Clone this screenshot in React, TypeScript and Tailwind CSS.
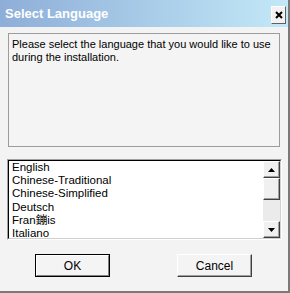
import React from "react";

const languages = [
  "English",
  "Chinese-Traditional",
  "Chinese-Simplified",
  "Deutsch",
  "Fran鏰is",
  "Italiano",
  "Espa駉l",
];

function ScrollButton({ dir }: { dir: "up" | "down" }) {
  return (
    <div className="h-[17px] w-full bg-[#f0f0f0] border-t border-l border-t-white border-l-white border-r border-b border-r-[#404040] border-b-[#404040] shadow-[inset_-1px_-1px_0_#a0a0a0] flex items-center justify-center">
      <svg width="7" height="4" viewBox="0 0 7 4">
        {dir === "up" ? <polygon points="3.5,0 7,4 0,4" fill="#000" /> : <polygon points="0,0 7,0 3.5,4" fill="#000" />}
      </svg>
    </div>
  );
}

export default function App() {
  return (
    <div
      className="w-[290px] h-[293px] bg-[#f3f3f3] flex flex-col border-r-2 border-b-2 border-[#7a7a7a] overflow-hidden"
      style={{ fontFamily: '"Liberation Sans", Arial, "Noto Sans CJK SC", sans-serif' }}
    >
      {/* title bar */}
      <div className="h-[27px] shrink-0 bg-gradient-to-r from-[#8eaed8] to-[#c3e8f7] flex items-center justify-between pl-[5px] pr-[2px]">
        <span className="text-white text-[13px] font-bold leading-none">Select Language</span>
        <div className="w-[15px] h-[18px] mt-[2px] bg-[#f2f2f2] border-t border-l border-white border-r border-b border-r-[#606060] border-b-[#606060] flex items-center justify-center">
          <svg width="8" height="8" viewBox="0 0 8 8">
            <path d="M1 1 L7 7 M7 1 L1 7" stroke="#000" strokeWidth="2" />
          </svg>
        </div>
      </div>

      {/* message box */}
      <div className="mt-[6px] ml-[8px] mr-[8px] h-[114px] border border-[#9c9c9c] bg-[#f4f4f4] px-[3px] pt-[4px]">
        <p className="text-[11px] leading-[13px] text-black">
          Please select the language that you would like to use during the installation.
        </p>
      </div>

      {/* list box */}
      <div className="mt-[12px] ml-[7px] mr-[6px] h-[81px] border border-t-[#a0a0a0] border-l-[#a0a0a0] border-r-white border-b-white">
        <div className="h-full flex border border-t-black border-l-black border-r-[#d0d0d0] border-b-[#d0d0d0] bg-white">
          <div className="flex-1 overflow-hidden pl-[3px]">
            {languages.map((l) => (
              <div key={l} className="text-[11.5px] leading-[13.2px] text-black whitespace-nowrap">
                {l}
              </div>
            ))}
          </div>
          <div className="w-[17px] flex flex-col bg-[#ebebeb]">
            <ScrollButton dir="up" />
            <div className="h-[22px] bg-[#f0f0f0] border-t border-l border-white border-r border-b border-r-[#404040] border-b-[#404040] shadow-[inset_-1px_-1px_0_#a0a0a0]" />
            <div className="flex-1" />
            <ScrollButton dir="down" />
          </div>
        </div>
      </div>

      {/* buttons */}
      <div className="mt-[14px] flex pl-[35px] gap-[67px]">
        <button className="w-[75px] h-[23px] border border-black bg-[#f4f4f4] flex items-center justify-center text-[12px] text-black">
          <span className="w-full h-full flex items-center justify-center border-t border-l border-white border-r border-b border-r-[#808080] border-b-[#808080]">
            OK
          </span>
        </button>
        <button className="w-[75px] h-[23px] bg-[#f4f4f4] border-t border-l border-white border-r border-b border-r-[#404040] border-b-[#404040] shadow-[inset_-1px_-1px_0_#a0a0a0] flex items-center justify-center text-[12px] text-black">
          Cancel
        </button>
      </div>
    </div>
  );
}
